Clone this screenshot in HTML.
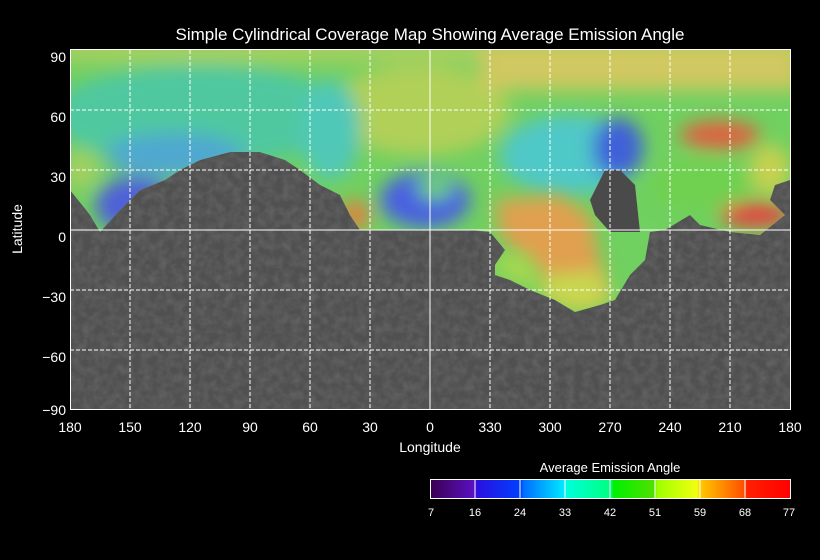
<!DOCTYPE html>
<html><head><style>
html,body{margin:0;padding:0;background:#000;width:820px;height:560px;overflow:hidden}
svg{display:block}
text{font-family:"Liberation Sans",sans-serif;fill:#fff}
</style></head><body>
<svg width="820" height="560" viewBox="0 0 820 560" xmlns="http://www.w3.org/2000/svg">
<defs>
<filter id="b" x="-30%" y="-30%" width="160%" height="160%"><feGaussianBlur stdDeviation="9"/></filter>
<filter id="n"><feTurbulence type="fractalNoise" baseFrequency="0.12" numOctaves="3" seed="4"/><feColorMatrix type="matrix" values="0 0 0 0 0.25  0 0 0 0 0.25  0 0 0 0 0.25  0 0 0 -1.6 1.1"/></filter>
<clipPath id="cm"><polygon points="70,50 790,50 790,180 775,185 770,200 785,215 760,235 730,232 700,225 690,215 665,230 650,232 645,260 630,275 615,300 600,305 575,312 555,300 530,290 510,280 495,275 495,265 505,250 490,232 470,230 360,230 350,215 340,195 320,185 300,170 285,160 260,152 230,152 200,160 180,170 165,180 140,190 120,210 100,232 90,215 70,190"/></clipPath>
<clipPath id="pa"><rect x="70" y="50" width="720" height="360"/></clipPath>
<linearGradient id="lg" x1="0" x2="1">
<stop offset="0" stop-color="#3a0050"/><stop offset="0.12" stop-color="#5a10c0"/>
<stop offset="0.13" stop-color="#2a10e0"/><stop offset="0.25" stop-color="#0040ff"/>
<stop offset="0.26" stop-color="#0070ff"/><stop offset="0.37" stop-color="#00e8ff"/>
<stop offset="0.38" stop-color="#00ffd8"/><stop offset="0.5" stop-color="#00ff80"/>
<stop offset="0.51" stop-color="#00f000"/><stop offset="0.62" stop-color="#50e000"/>
<stop offset="0.63" stop-color="#a0ff00"/><stop offset="0.74" stop-color="#f0ff10"/>
<stop offset="0.75" stop-color="#ffc800"/><stop offset="0.87" stop-color="#ff5000"/>
<stop offset="0.88" stop-color="#ff2000"/><stop offset="1" stop-color="#ff0000"/>
</linearGradient>
</defs>
<text x="430" y="40" font-size="17" text-anchor="middle">Simple Cylindrical Coverage Map Showing Average Emission Angle</text>
<g clip-path="url(#pa)">
<rect x="70" y="50" width="720" height="360" fill="#505050"/>
<rect x="70" y="50" width="720" height="360" filter="url(#n)" opacity="0.35"/>
<g clip-path="url(#cm)">
<rect x="60" y="40" width="740" height="280" fill="#70d060"/>
<g filter="url(#b)">
<rect x="60" y="40" width="740" height="22" fill="#a8d060"/>
<ellipse cx="200" cy="115" rx="150" ry="50" fill="#50c8a0"/>
<ellipse cx="175" cy="155" rx="70" ry="22" fill="#50a8d0"/>
<ellipse cx="135" cy="205" rx="40" ry="28" fill="#5060d8"/>
<ellipse cx="80" cy="170" rx="20" ry="20" fill="#a0d060"/>
<ellipse cx="420" cy="110" rx="90" ry="45" fill="#b0d058"/>
<ellipse cx="330" cy="130" rx="30" ry="50" fill="#50c8b8"/>
<ellipse cx="425" cy="200" rx="45" ry="28" fill="#4860e0"/>
<ellipse cx="435" cy="188" rx="18" ry="12" fill="#70d070"/>
<ellipse cx="355" cy="215" rx="15" ry="15" fill="#e08040"/>
<ellipse cx="570" cy="155" rx="70" ry="40" fill="#50c8c8"/>
<ellipse cx="618" cy="148" rx="25" ry="30" fill="#4060d8"/>
<rect x="480" y="40" width="320" height="50" fill="#d0c860"/>
<ellipse cx="720" cy="135" rx="40" ry="14" fill="#e06040"/>
<ellipse cx="700" cy="185" rx="50" ry="25" fill="#70d050"/>
<ellipse cx="755" cy="215" rx="35" ry="12" fill="#e84040"/>
<ellipse cx="770" cy="170" rx="20" ry="25" fill="#c8d050"/>
</g>
<polygon points="495,200 560,195 590,215 600,260 605,300 565,300 520,255 500,235" fill="#e0a050" filter="url(#b)"/>
<polygon points="540,275 600,270 610,300 580,312 545,300" fill="#c8d850" filter="url(#b)"/>
<polygon points="495,255 530,255 540,290 510,280 495,270" fill="#a8d850" filter="url(#b)"/>
<polygon points="605,170 620,170 635,185 640,232 610,232 595,215 590,200" fill="#4a4a4a"/>
</g>
</g>
<g stroke="#fff" stroke-width="1" fill="none">
<g stroke-dasharray="4,2">
<line x1="130" y1="50" x2="130" y2="410"/><line x1="190" y1="50" x2="190" y2="410"/><line x1="250" y1="50" x2="250" y2="410"/><line x1="310" y1="50" x2="310" y2="410"/><line x1="370" y1="50" x2="370" y2="410"/>
<line x1="490" y1="50" x2="490" y2="410"/><line x1="550" y1="50" x2="550" y2="410"/><line x1="610" y1="50" x2="610" y2="410"/><line x1="670" y1="50" x2="670" y2="410"/><line x1="730" y1="50" x2="730" y2="410"/>
<line x1="70" y1="110" x2="790" y2="110"/><line x1="70" y1="170" x2="790" y2="170"/><line x1="70" y1="290" x2="790" y2="290"/><line x1="70" y1="350" x2="790" y2="350"/>
</g>
<line x1="430" y1="50" x2="430" y2="410"/><line x1="70" y1="230" x2="790" y2="230"/>
<rect x="70.5" y="49.5" width="720" height="360"/>
</g>
<g font-size="14" text-anchor="end">
<text x="66" y="62">90</text><text x="66" y="122">60</text><text x="66" y="182">30</text><text x="66" y="242">0</text><text x="66" y="302">−30</text><text x="66" y="362">−60</text><text x="66" y="415">−90</text>
</g>
<g font-size="14" text-anchor="middle">
<text x="70" y="432">180</text><text x="130" y="432">150</text><text x="190" y="432">120</text><text x="250" y="432">90</text><text x="310" y="432">60</text><text x="370" y="432">30</text><text x="430" y="432">0</text><text x="490" y="432">330</text><text x="550" y="432">300</text><text x="610" y="432">270</text><text x="670" y="432">240</text><text x="730" y="432">210</text><text x="790" y="432">180</text>
<text x="430" y="452">Longitude</text>
<text transform="translate(22,229) rotate(-90)">Latitude</text>
</g>
<text x="610" y="472" font-size="13" text-anchor="middle">Average Emission Angle</text>
<rect x="430.5" y="479.5" width="360" height="19" fill="url(#lg)" stroke="#fff"/>
<g stroke="#fff"><line x1="475" y1="480" x2="475" y2="499"/><line x1="520" y1="480" x2="520" y2="499"/><line x1="565" y1="480" x2="565" y2="499"/><line x1="610" y1="480" x2="610" y2="499"/><line x1="655" y1="480" x2="655" y2="499"/><line x1="700" y1="480" x2="700" y2="499"/><line x1="745" y1="480" x2="745" y2="499"/></g>
<g font-size="11" text-anchor="middle">
<text x="431" y="516">7</text><text x="475" y="516">16</text><text x="520" y="516">24</text><text x="565" y="516">33</text><text x="610" y="516">42</text><text x="655" y="516">51</text><text x="700" y="516">59</text><text x="745" y="516">68</text><text x="789" y="516">77</text>
</g>
</svg>
</body></html>
